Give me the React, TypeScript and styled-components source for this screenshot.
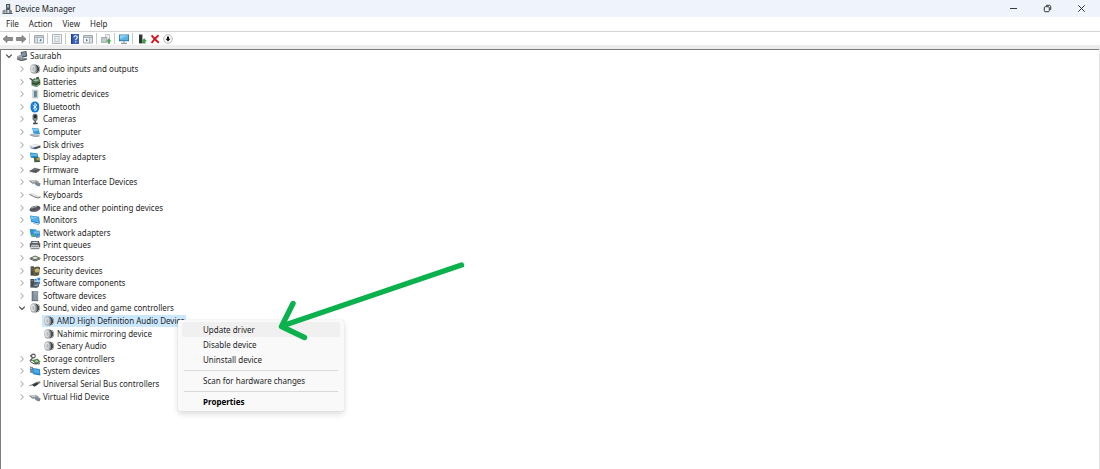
import React from "react";
import styled, { createGlobalStyle } from "styled-components";

const GlobalStyle = createGlobalStyle`
  *, *::before, *::after { box-sizing: border-box; }
  html, body { margin: 0; padding: 0; }
  body {
    background: #fff;
    color: #1f1f1f;
    font-family: "Noto Sans", "Open Sans", sans-serif;
    font-size: 8px;
    line-height: 12px;
    overflow: hidden;
  }
  button { font: inherit; color: inherit; border: 0; padding: 0; background: none; }
  svg { display: block; }
`;

const Window = styled.div`
  position: relative;
  display: flex;
  flex-direction: column;
  min-height: 100vh;
`;

const TitleBar = styled.header`
  display: flex;
  align-items: center;
  justify-content: space-between;
  height: 17px;
  padding: 0 2px;
  background: #eff3fb;
`;

const Title = styled.h1`
  display: flex;
  align-items: center;
  gap: 2px;
  margin: 0;
  font-size: inherit;
  font-weight: 400;
`;

const WindowControls = styled.div`
  display: flex;
`;

const WindowButton = styled.button`
  display: flex;
  align-items: center;
  justify-content: center;
  width: 34px;
  height: 17px;
`;

const MenuBar = styled.nav`
  display: flex;
  align-items: center;
  gap: 10px;
  height: 15px;
  padding: 0 6px;
  border-bottom: 1px solid #d4d4d4;
`;

const ToolBar = styled.div`
  display: flex;
  align-items: center;
  height: 13px;
  padding: 0 1px;
`;

const ToolButton = styled.button`
  display: flex;
  align-items: center;
  justify-content: center;
  width: 13px;
  height: 13px;
`;

const ToolSeparator = styled.span`
  width: 1px;
  height: 11px;
  margin: 0 2px;
  background: #c9c9c9;
`;

const Content = styled.main`
  display: flex;
  flex: 1;
  border-top: 4px solid #ededed;
  border-right: 1px solid #e3e3e3;
`;

const TreePanel = styled.div`
  flex: 1;
  border-top: 1px solid #7d7d7d;
  border-left: 1px solid #7d7d7d;
`;

const Tree = styled.ul`
  display: grid;
  grid-auto-rows: 1fr;
  min-height: 353px;
  margin: 0;
  padding: 0;
  list-style: none;
`;

const indents = [4, 17, 31];

const TreeRow = styled.li<{ $level: number }>`
  display: flex;
  align-items: center;
  gap: 2px;
  padding-left: ${({ $level }) => indents[$level]}px;
`;

const Expander = styled.button`
  display: flex;
  justify-content: center;
  width: 8px;
`;

const ExpanderSpace = styled.span`
  width: 8px;
`;

const Label = styled.span<{ $selected?: boolean }>`
  display: flex;
  align-items: center;
  gap: 2px;
  padding: 0 1px;
  white-space: nowrap;
  background: ${({ $selected }) => ($selected ? "#cce8ff" : "transparent")};
`;

const ContextMenu = styled.div`
  position: absolute;
  left: 178px;
  top: 320px;
  display: flex;
  flex-direction: column;
  width: 166px;
  padding: 2px 4px;
  border-radius: 2px;
  background: #f9f9f9;
  box-shadow: 0 0 1px rgba(0, 0, 0, 0.2), 0 3px 6px rgba(0, 0, 0, 0.14);
`;

const ContextItem = styled.button<{ $active?: boolean; $strong?: boolean }>`
  height: 15px;
  padding: 0 21px;
  border-radius: 2px;
  text-align: left;
  font-weight: ${({ $strong }) => ($strong ? 700 : 400)};
  color: ${({ $strong }) => ($strong ? "#000" : "inherit")};
  background: ${({ $active }) => ($active ? "#f0f0f0" : "transparent")};
`;

const ContextSeparator = styled.hr`
  width: 154px;
  height: 1px;
  margin: 3px 2px 2px;
  border: 0;
  background: #dadada;
`;

const Pointer = styled.svg`
  position: absolute;
  left: 270px;
  top: 255px;
  pointer-events: none;
`;

const Ico = ({ children }: { children: React.ReactNode }) => (
  <svg width="12" height="12" viewBox="0 0 12 12" fill="none" aria-hidden="true">
    {children}
  </svg>
);

const icons: Record<string, React.ReactNode> = {
  pc: (
    <>
      <path d="M4.6 2 10.400 1l.8 5.600-5.200 1.200z" fill="#4a545c" />
      <path d="m5.600 2.800 4-.8.5 3.800-3.900.8z" fill="#82919b" />
      <path d="m1 6.600 4-2 1.400 3.200 4.400.2.4 1.600L5.600 11 .8 9.400z" fill="#858d93" />
      <path d="m1.600 9.400 4 1.200 5-1.200" stroke="#50585e" strokeWidth=".9" />
      <path d="m1.600 7.200 3.200-1.400 1 2.600" stroke="#c3c9cd" strokeWidth=".8" />
    </>
  ),
  speaker: (
    <>
      <ellipse cx="4.600" cy="6" rx="3.500" ry="4.800" fill="#a9adb0" />
      <ellipse cx="3.900" cy="5.700" rx="2.200" ry="3.500" fill="#dcdfe1" />
      <ellipse cx="4.500" cy="6" rx="1.100" ry="2" fill="#b4b8bb" />
      <path d="M5 1.200c3.400.6 4 8.400.6 9.800 3.200-.6 4.600-2.400 4.600-5S8.600 1.400 5 1.200z" fill="#43494d" />
      <path d="M6.600 3.200c1.400 1 1.400 4.400 0 5.600" stroke="#84898d" strokeWidth=".9" />
      <path d="M9.300 2.200c1.900 1.800 1.900 5.800 0 7.600" stroke="#9aa0a4" strokeWidth="1" />
    </>
  ),
  battery: (
    <>
      <path d="m2.400 4.400 3-2.200 5.800 1.200.2 5-3.800 2.800-5-1.600z" fill="#4b7450" />
      <path d="m4 4.600 3.400-1.400 3 .8-3.200 1.600z" fill="#a4bca6" />
      <path d="M.6 2.600c1.600-.2 2.200 1.400 3.400 2M3 7l4 1.200 4-2" stroke="#2c4030" strokeWidth="1.100" />
      <path d="m3.400 9.400 3.600 1.200 3.200-2.200" stroke="#8bc78d" strokeWidth=".9" />
      <path d="m7 1.400 2.600-.6.8 2-3 .4z" fill="#39513d" />
    </>
  ),
  biometric: (
    <>
      <path d="M3.200 1.500h5.400v9H3.200z" fill="#c5d1d6" />
      <path d="M5 3h2.800v6.200H5z" fill="#78929d" />
      <path d="M5.800 3v6M7 3v6" stroke="#4e7384" strokeWidth=".6" />
      <path d="M8.800 1.800v8.400" stroke="#b5d6b5" />
    </>
  ),
  bluetooth: (
    <>
      <rect x="1.600" y=".6" width="8.600" height="10.800" rx="4.200" fill="#0f78d8" />
      <path d="m3.800 4 4.200 3.800-2.100 1.900V2.300L8 4.200 3.800 8" stroke="#fff" strokeWidth=".9" />
    </>
  ),
  camera: (
    <>
      <rect x="3.600" y=".8" width="5" height="7.200" rx="2.200" fill="#6a7074" />
      <circle cx="6.200" cy="3.600" r="1.500" fill="#1e2224" />
      <path d="M3.600 2v4.500" stroke="#b8bdc0" />
      <path d="M6.200 7.800v1.900M4 10.500h4.600" stroke="#44494c" strokeWidth="1.400" />
      <path d="M5 6.400h2.400" stroke="#a4aaad" strokeWidth=".7" />
    </>
  ),
  computer: (
    <>
      <path d="m3 1.800 6.600.6 1.400 6-6.600-.8z" fill="#3a9ad9" />
      <path d="m3.600 2.400 5.400.4.4 2-5.200.6z" fill="#7cc6f0" />
      <path d="m.6 8.200 3-.8 6.800 1.400-1.200 1.600-4.800.2z" fill="#b3bbc0" />
      <path d="m1 9 5 1.600 4.600-.6" stroke="#7c868c" strokeWidth=".7" />
    </>
  ),
  disk: (
    <>
      <path d="m.6 6.600 6.200-1.600 4.600 1.400v2L6 10.200.8 8.600z" fill="#ccd0d3" />
      <path d="M4.800 8.400 11.400 6.600v1.800L6.400 10.200 3.600 9.600z" fill="#4a5156" />
      <path d="m1.200 6.800 5.400-1.200 3.800 1-5.600 1.400z" fill="#f0f1f2" />
      <path d="m1.600 8.900 3.200.9" stroke="#4f8bd6" strokeWidth=".9" />
    </>
  ),
  display: (
    <>
      <path d="m1 1.600 7.600.8.8 5.200-7.600-.8z" fill="#1f86c7" />
      <path d="m1.800 2.400 6 .6.4 2-6 .2z" fill="#62b8e6" />
      <path d="m4.600 6 6 .6v4l-5.200.4z" fill="#4f6b4c" />
      <path d="M7.600 8h2.600" stroke="#d0a845" strokeWidth="1.600" />
      <path d="M5.600 10.800 11 10.400" stroke="#2f3c35" strokeWidth=".8" />
    </>
  ),
  firmware: (
    <>
      <path d="m.6 7 5-3.200 5.800 1.400-4.400 3.400z" fill="#565c60" />
      <path d="m.6 7 6.400 1.600 4.400-3.200" stroke="#3a3f42" strokeWidth=".8" />
      <path d="m2 7.600-1 1M4.200 8v1.200M9 7.400l1 .6" stroke="#8a9093" strokeWidth=".8" />
      <path d="m4 5.800 2.200-1 2 .4" stroke="#92989b" strokeWidth=".7" />
    </>
  ),
  hid: (
    <>
      <path d="m.4 4.600 6.200-.8 3 1.600-5.800 1.800z" fill="#a0a7ab" />
      <path d="m.4 4.800 3.400 2.600 5.600-1.600" stroke="#6d757a" strokeWidth=".9" />
      <path d="M5.600 7c2-1.400 5-.8 6 .6l-.8 2.600c-2 .4-4.400-.6-5.200-3.200z" fill="#838a8f" />
      <path d="M6 7.400c1.600 1.600 3.600 2 5 1.200" stroke="#5d87ad" strokeWidth=".8" />
      <path d="m2 5 4-.6M3 5.800l4-.8" stroke="#e4e7e9" strokeWidth=".5" />
    </>
  ),
  keyboard: (
    <>
      <path d="m.4 4.800 3-.6 8.200 3.400-2.600 1.600z" fill="#d3d7d9" />
      <path d="M.4 5.200 4.600 7.600l4.600 1.400 2.400-1" stroke="#70777c" strokeWidth="1" />
      <path d="m2.400 5 6.800 3M3.600 4.800l6.200 2.800" stroke="#f4f5f6" strokeWidth=".4" />
    </>
  ),
  mouse: (
    <>
      <path d="M.6 7.600C1.400 5 5 3.400 8.400 3.800c3 .4 3.800 2 2.400 3.600-1.800 2-5 2.600-7.400 2.400-2-.2-3.200-.8-2.800-2.200z" fill="#4c525d" />
      <path d="M2.400 6.400c1.400-1.400 3.600-2 5.600-1.800" stroke="#a3a9b3" strokeWidth="1.200" />
      <path d="M5.400 7c2 .4 3.800.2 5-.8" stroke="#84505a" strokeWidth=".7" />
      <path d="M2 9c3 .8 6 0 8-1.400" stroke="#747b88" strokeWidth=".8" />
    </>
  ),
  monitor: (
    <>
      <path d="m1 1.400 9 1.400 1 7-8.800-1.800z" fill="#2386cc" />
      <path d="m1.700 2.200 7.600 1.200.8 5-7.400-1.400z" fill="#4fafe8" />
      <path d="m1.700 2.200 7.600 1.200L2.400 5.200z" fill="#7ac7f2" />
      <path d="m4.400 9.400 5.600 1.200" stroke="#9aa4aa" strokeWidth=".9" />
    </>
  ),
  network: (
    <>
      <path d="m.8 2 6.400.6.6 6L1.600 8z" fill="#2c8fd0" />
      <path d="m3.600 3.200 7 .6.6 5.800-7 .6z" fill="#3593d8" />
      <path d="m4.600 4.200 5.200.4v1.800l-5 .2z" fill="#74c2ee" />
      <path d="M1.800 8.400c0-1.600 4-1.600 4.600 0 0 2-4.200 2.200-4.600 0z" fill="#57a978" />
      <path d="m7 10.400 3.600-.4" stroke="#59646b" strokeWidth=".8" />
    </>
  ),
  printer: (
    <>
      <path d="M2.400 2h7.400l.8 2.400h-9z" fill="#4f565a" />
      <path d="M3.400 2.800h5.400V4H3.400z" fill="#d5dadc" />
      <path d="M.8 4.200h10.400v4.200H.8z" fill="#50575b" />
      <path d="M2.600 5.800h6.800l.8 3.600H1.800z" fill="#d5d9db" />
      <path d="M3 7.300h6" stroke="#6b7276" strokeWidth=".9" />
      <path d="M1.600 9.700h8.800" stroke="#5c6468" strokeWidth=".9" />
    </>
  ),
  processor: (
    <>
      <path d="m.4 6 5.800-2.400L11.800 6 6 8.600z" fill="#5d6458" />
      <path d="m2.800 5.900 3.400-1.300L9.400 5.900 6 7.300z" fill="#dfe3d8" />
      <path d="M.8 6.800 6 9l5.400-2.200" stroke="#465142" strokeWidth=".9" />
    </>
  ),
  security: (
    <>
      <path d="M1.600 1.400h3.400v9.200H1.600z" fill="#41474c" />
      <path d="M4.400 2.600 8 1.400l2.800 1.400-.6 7-4 1.400-2-1z" fill="#66603f" />
      <path d="M5.400 4.400 9 3.200l1.400 1.400-.8 2.400-3.200.8z" fill="#c9b06a" />
      <path d="m6.400 8 2.800 2.400M9.600 1.600l1.200 2.400" stroke="#333" />
      <path d="M2.400 3.400h1.400M2.400 5.200h1.400" stroke="#a2a8ac" strokeWidth=".6" />
    </>
  ),
  component: (
    <>
      <path d="M1.400 2h4v8.600h-4z" fill="#474e53" />
      <path d="M4.600 5 8 4.600l2.400 2-.8 3.400-3.400 1.200-2-1.400z" fill="#52626f" />
      <path d="M8.400.8h2.800v2.800H8.400zM5.800 1.800h2v2h-2zM8.600 4.400H11v2.400H8.600z" fill="#2f86dd" />
      <path d="m5.600 8.400 3.400-.6" stroke="#b9c6d0" />
      <path d="M2.400 3.600h1.600" stroke="#a2a8ac" strokeWidth=".7" />
    </>
  ),
  software: (
    <>
      <path d="M2.800 1h6.400v10H2.800z" fill="#8795a1" />
      <path d="M2.800 1h1.400v10H2.800z" fill="#6b7984" />
      <path d="M5.200 2.400h3M5.200 4h3" stroke="#a9b6c0" strokeWidth=".7" />
      <path d="M2.800 10.700h6.400" stroke="#59656f" strokeWidth=".8" />
    </>
  ),
  storage: (
    <>
      <circle cx="4.400" cy="3" r="1.900" stroke="#4d5452" strokeWidth="1.100" />
      <path d="M1 2.400 3 4M3.600 4.800 1.400 7.200h5" stroke="#4d5452" strokeWidth="1.100" />
      <path d="m3.400 7.600 5.200-2 3 3.400-4.800 2.400z" fill="#4a8347" />
      <path d="m1 8.400 4 2.400h6" stroke="#3a4238" strokeWidth=".9" />
      <path d="m5.600 8 2.400-.9 1.400 1.400-2.400.9z" fill="#b5cfae" />
    </>
  ),
  system: (
    <>
      <path d="M.8 1.600 4 2v6.400L1 7.600z" fill="#7b8b97" />
      <path d="m3.400 3 7.400 1 .6 6.400-7.200-1.200z" fill="#1f86cc" />
      <path d="m4.200 3.900 5.800.8.4 4-5.600-.9z" fill="#4aabe6" />
      <path d="M1.600 3.200 3 3.400" stroke="#ccd6dc" strokeWidth=".7" />
    </>
  ),
  usb: (
    <>
      <path d="M2.600 6.800 7.600 4l2.400 1.800-4.600 3z" fill="#2c3134" />
      <path d="m7.600 4 2.800-.8 1.400 1.200-2 1.600z" fill="#7a8084" />
      <path d="M.4 7.600 3 7" stroke="#8b9195" strokeWidth="1.100" />
      <path d="m3.800 6.600 3.600-1.600" stroke="#7b8185" strokeWidth=".6" />
    </>
  ),
};

type Node = { label: string; icon: string; level: number; open?: boolean; selected?: boolean };

const nodes: Node[] = [
  { label: "Saurabh", icon: "pc", level: 0, open: true },
  { label: "Audio inputs and outputs", icon: "speaker", level: 1 },
  { label: "Batteries", icon: "battery", level: 1 },
  { label: "Biometric devices", icon: "biometric", level: 1 },
  { label: "Bluetooth", icon: "bluetooth", level: 1 },
  { label: "Cameras", icon: "camera", level: 1 },
  { label: "Computer", icon: "computer", level: 1 },
  { label: "Disk drives", icon: "disk", level: 1 },
  { label: "Display adapters", icon: "display", level: 1 },
  { label: "Firmware", icon: "firmware", level: 1 },
  { label: "Human Interface Devices", icon: "hid", level: 1 },
  { label: "Keyboards", icon: "keyboard", level: 1 },
  { label: "Mice and other pointing devices", icon: "mouse", level: 1 },
  { label: "Monitors", icon: "monitor", level: 1 },
  { label: "Network adapters", icon: "network", level: 1 },
  { label: "Print queues", icon: "printer", level: 1 },
  { label: "Processors", icon: "processor", level: 1 },
  { label: "Security devices", icon: "security", level: 1 },
  { label: "Software components", icon: "component", level: 1 },
  { label: "Software devices", icon: "software", level: 1 },
  { label: "Sound, video and game controllers", icon: "speaker", level: 1, open: true },
  { label: "AMD High Definition Audio Device", icon: "speaker", level: 2, selected: true },
  { label: "Nahimic mirroring device", icon: "speaker", level: 2 },
  { label: "Senary Audio", icon: "speaker", level: 2 },
  { label: "Storage controllers", icon: "storage", level: 1 },
  { label: "System devices", icon: "system", level: 1 },
  { label: "Universal Serial Bus controllers", icon: "usb", level: 1 },
  { label: "Virtual Hid Device", icon: "hid", level: 1 },
];

const panel = (
  <>
    <path d="M1.500 2.500h9v7.500h-9z" fill="#f4f6f7" stroke="#a0a8ac" />
    <path d="M2 4.200h8" stroke="#8fa0aa" strokeWidth="1.200" />
  </>
);

const tools: (null | { name: string; art: React.ReactNode })[] = [
  { name: "Back", art: <path d="m1 6 4-3.500v2h5.600v3H5v2z" fill="#8c8c8c" stroke="#6c6c6c" strokeWidth=".7" /> },
  { name: "Forward", art: <path d="M11 6 7 2.500v2H1.400v3H7v2z" fill="#8c8c8c" stroke="#6c6c6c" strokeWidth=".7" /> },
  null,
  {
    name: "Show console tree",
    art: (
      <>
        {panel}
        <path d="M4.500 5v5" stroke="#9aa7ae" strokeWidth=".8" />
        <path d="M8.400 5.600v3.200L6.200 7.200z" fill="#3e7a8c" />
        <path d="M2.400 6.200h1.200M2.400 8h1.200" stroke="#6fa3b5" strokeWidth=".8" />
      </>
    ),
  },
  null,
  {
    name: "Properties",
    art: (
      <>
        <path d="M1.500 1.500h9v9h-9z" fill="#f3f5f6" stroke="#a5adb1" strokeWidth=".9" />
        <path d="M3 3.400h6M3 5.200h2.400M6.600 5.200H9M3 7h2.400M6.600 7H9M3 8.800h6" stroke="#b2bcc1" strokeWidth=".9" />
      </>
    ),
  },
  null,
  {
    name: "Help",
    art: (
      <>
        <path d="M2 1h8v10H2z" fill="#3c62bd" />
        <path d="M2 1h1.400v10H2z" fill="#243f8c" />
        <path d="M5 4.300c0-2.200 3.400-2 3.300 0C8.200 5.600 6.700 5.600 6.700 7.200M6.700 8.200v1.200" stroke="#fff" strokeWidth="1.100" />
      </>
    ),
  },
  {
    name: "Show action pane",
    art: (
      <>
        {panel}
        <path d="M7.500 5v5" stroke="#9aa7ae" strokeWidth=".8" />
        <path d="M4 5.800v2.800L6 7.200z" fill="#56707a" />
        <path d="M8.400 6.200h1.200M8.400 8h1.200" stroke="#8fa0aa" strokeWidth=".8" />
      </>
    ),
  },
  null,
  {
    name: "Update device driver",
    art: (
      <>
        <path d="M5.500 1.500h4v6h-4z" fill="#eef1f2" stroke="#b6bcc0" strokeWidth=".8" />
        <path d="M1.500 4.500H7v5H1.500z" fill="#c3c8cb" stroke="#949ca0" strokeWidth=".7" />
        <path d="M7.800 10.800V8.400H6.400L8.900 5.200l2.500 3.200H10v2.400z" fill="#4bab52" />
      </>
    ),
  },
  null,
  {
    name: "Scan for hardware changes",
    art: (
      <>
        <path d="M1 1.500h10v6.700H1z" fill="#2b78ab" />
        <path d="M1.800 2.300h8.400v5H1.800z" fill="#5bb3e2" />
        <path d="M1.800 2.300h8.400L1.800 6z" fill="#8ed0f0" />
        <path d="M6 8.200v1.600M3 10.300h6" stroke="#78858d" />
      </>
    ),
  },
  null,
  {
    name: "Enable device",
    art: (
      <>
        <path d="M3 1.500h3.400v8.600H3z" fill="#2d3431" />
        <path d="M6.800 10.600V8.200H5.400l2.800-3 2.800 3H9.500v2.400z" fill="#3c9e45" />
        <path d="M3 9.800h3.600" stroke="#333" />
      </>
    ),
  },
  { name: "Uninstall device", art: <path d="M2.600 2.400c2 2.400 4 5 7.200 7.400M9.600 2.200C6.800 4.400 4.400 7 2.600 10" stroke="#d8121c" strokeWidth="1.900" /> },
  {
    name: "Disable device",
    art: (
      <>
        <circle cx="6" cy="6" r="4.300" fill="#fff" stroke="#a5a5a5" strokeWidth=".8" />
        <path d="M5 3.400h2v2.400h1.600L6 8.600 3.400 5.800H5z" fill="#111" />
      </>
    ),
  },
];

const Chevron = ({ open }: { open?: boolean }) => (
  <svg width="8" height="8" viewBox="0 0 8 8" fill="none" aria-hidden="true">
    {open ? (
      <path d="M1.200 2.700 4 5.400l2.800-2.700" stroke="#404040" strokeWidth="1.100" />
    ) : (
      <path d="M2.700 1.200 5.300 4 2.700 6.800" stroke="#8a8a8a" strokeWidth=".9" />
    )}
  </svg>
);

export default function App() {
  return (
    <Window>
      <GlobalStyle />
      <TitleBar>
        <Title>
          <svg width="11" height="12" viewBox="0 0 11 12" fill="none" aria-hidden="true">
            <path d="M4 1h4.200v6H4z" fill="#4f585f" />
            <path d="M5 2h2v2.600H5z" fill="#a9b4bb" />
            <path d="m.6 7.600 3-1.200v3l-3 .6zM6.800 6.600 10 7.600v2.600H6.800z" fill="#7d878d" />
            <path d="M.5 10.500h10M4.800 7v3.400" stroke="#5a636a" strokeWidth="1.200" />
          </svg>
          Device Manager
        </Title>
        <WindowControls>
          <WindowButton aria-label="Minimize">
            <svg width="9" height="9" viewBox="0 0 9 9"><path d="M1 4.500h7" stroke="#3a3a3a" /></svg>
          </WindowButton>
          <WindowButton aria-label="Restore">
            <svg width="9" height="9" viewBox="0 0 9 9" fill="none" stroke="#333">
              <rect x="1.300" y="2.700" width="5" height="5" rx="1" />
              <path d="M3 1.300h3.200c1 0 1.500.5 1.500 1.500V6" />
            </svg>
          </WindowButton>
          <WindowButton aria-label="Close">
            <svg width="9" height="9" viewBox="0 0 9 9"><path d="m1.300 1.300 6.400 6.400M7.700 1.300 1.300 7.700" stroke="#333" /></svg>
          </WindowButton>
        </WindowControls>
      </TitleBar>
      <MenuBar>
        {["File", "Action", "View", "Help"].map((m) => (
          <button key={m}>{m}</button>
        ))}
      </MenuBar>
      <ToolBar role="toolbar">
        {tools.map((t, i) =>
          t ? (
            <ToolButton key={i} aria-label={t.name}>
              <Ico>{t.art}</Ico>
            </ToolButton>
          ) : (
            <ToolSeparator key={i} />
          )
        )}
      </ToolBar>
      <Content>
        <TreePanel>
          <Tree role="tree">
            {nodes.map((n) => (
              <TreeRow key={n.label} $level={n.level} role="treeitem" aria-level={n.level + 1} aria-selected={!!n.selected}>
                {n.level < 2 ? (
                  <Expander aria-label={n.open ? "Collapse" : "Expand"}>
                    <Chevron open={n.open} />
                  </Expander>
                ) : (
                  <ExpanderSpace />
                )}
                <Label $selected={n.selected}>
                  <Ico>{icons[n.icon]}</Ico>
                  {n.label}
                </Label>
              </TreeRow>
            ))}
          </Tree>
        </TreePanel>
      </Content>
      <ContextMenu role="menu">
        <ContextItem role="menuitem" $active>Update driver</ContextItem>
        <ContextItem role="menuitem">Disable device</ContextItem>
        <ContextItem role="menuitem">Uninstall device</ContextItem>
        <ContextSeparator />
        <ContextItem role="menuitem">Scan for hardware changes</ContextItem>
        <ContextSeparator />
        <ContextItem role="menuitem" $strong>Properties</ContextItem>
      </ContextMenu>
      <Pointer width="200" height="90" viewBox="270 255 200 90" fill="none" aria-hidden="true">
        <path d="M461.500 265 282 326M293 303.500 281.500 326.500 304.500 337.500" stroke="#0ab14c" strokeWidth="5.400" strokeLinecap="round" strokeLinejoin="round" />
      </Pointer>
    </Window>
  );
}
